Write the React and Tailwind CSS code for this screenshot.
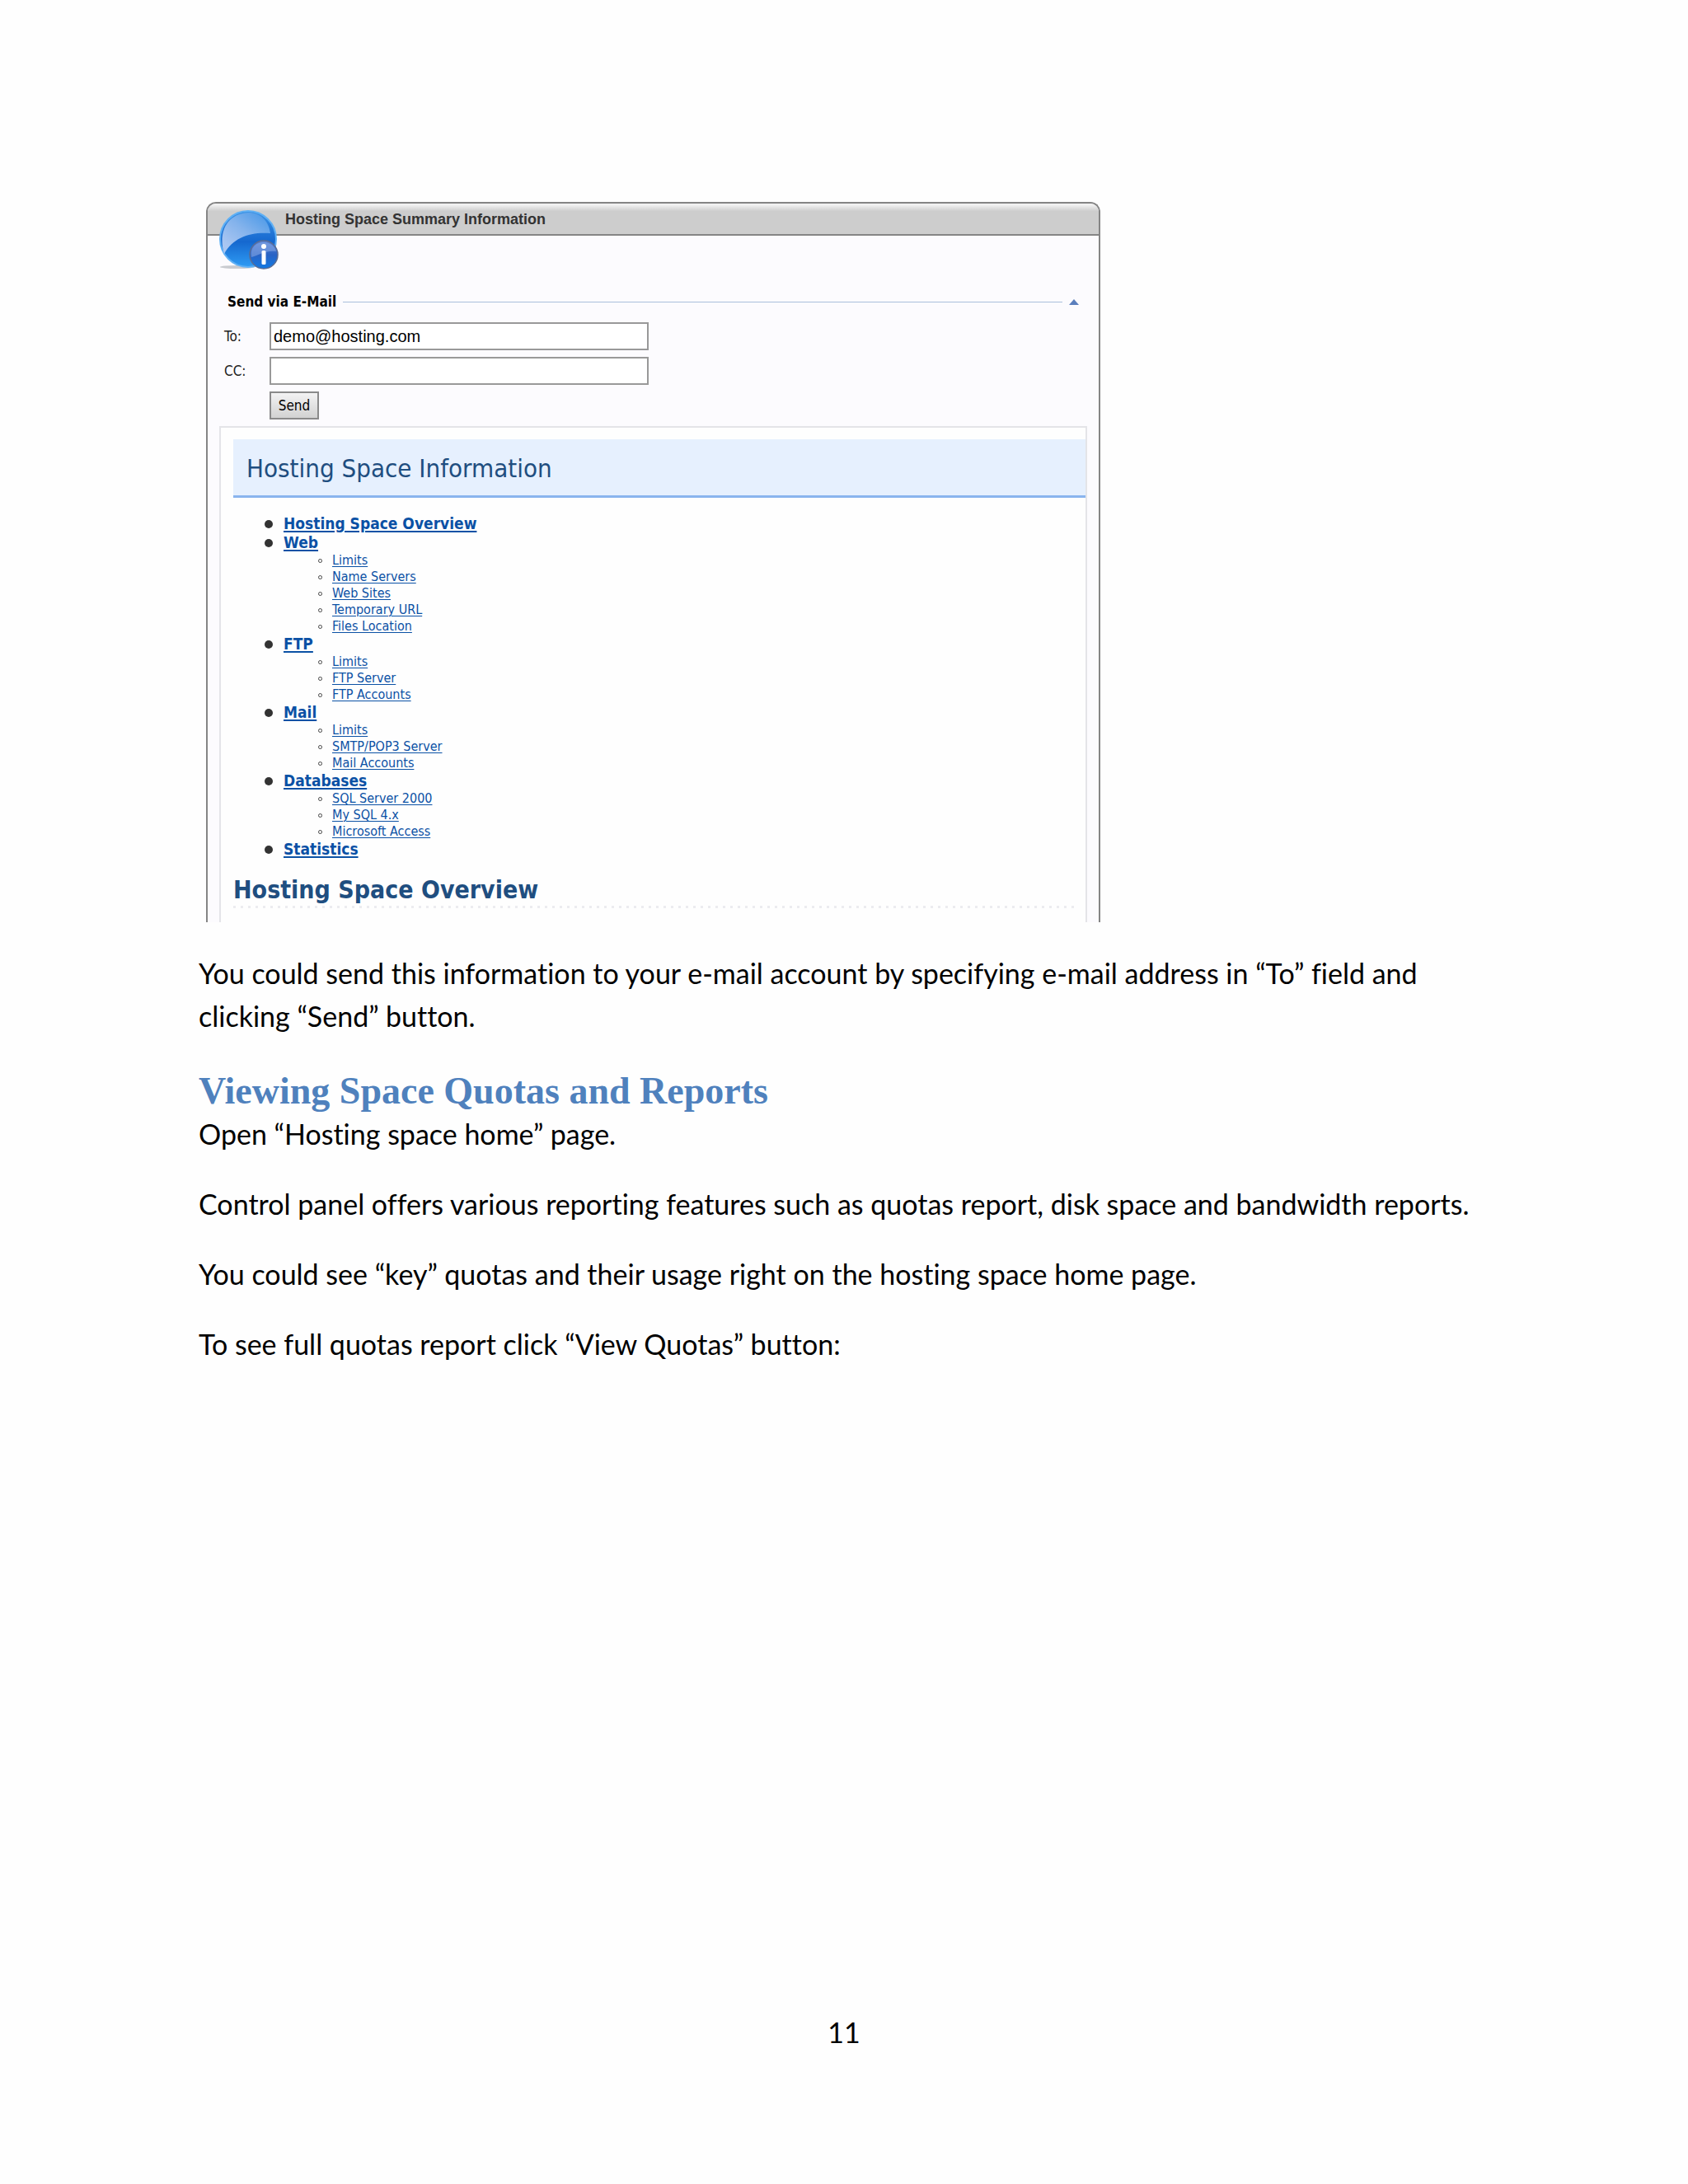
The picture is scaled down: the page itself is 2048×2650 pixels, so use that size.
import React, { useState } from 'react';

const sections = [
    { title: 'Hosting Space Overview', items: [] },
    { title: 'Web', items: ['Limits', 'Name Servers', 'Web Sites', 'Temporary URL', 'Files Location'] },
    { title: 'FTP', items: ['Limits', 'FTP Server', 'FTP Accounts'] },
    { title: 'Mail', items: ['Limits', 'SMTP/POP3 Server', 'Mail Accounts'] },
    { title: 'Databases', items: ['SQL Server 2000', 'My SQL 4.x', 'Microsoft Access'] },
    { title: 'Statistics', items: [] },
];

const slug = (...parts) => '#' + parts.join('-').toLowerCase().replace(/[^a-z0-9]+/g, '-');

const InfoIcon = () => (
    <svg viewBox="0 0 72 74" className="absolute left-[14px] top-[7px] w-[72px] h-[74px]" aria-hidden="true">
        <defs>
            <linearGradient id="ball" x1="0" y1="0" x2="0" y2="1">
                <stop offset="0" stopColor="#3f95e6" />
                <stop offset="0.55" stopColor="#1568cf" />
                <stop offset="1" stopColor="#2f9cf4" />
            </linearGradient>
            <linearGradient id="gloss" x1="0.8" y1="0" x2="0.1" y2="0.8">
                <stop offset="0" stopColor="#4f9be8" />
                <stop offset="0.5" stopColor="#84b3ec" />
                <stop offset="1" stopColor="#a9c6f2" />
            </linearGradient>
            <linearGradient id="badge" x1="0" y1="0" x2="0" y2="1">
                <stop offset="0" stopColor="#5c86d6" />
                <stop offset="0.5" stopColor="#2a63c4" />
                <stop offset="1" stopColor="#1179e4" />
            </linearGradient>
        </defs>
        <ellipse cx="22" cy="70" rx="21" ry="2" fill="#c9cbd0" />
        <circle cx="35" cy="36" r="34" fill="url(#ball)" stroke="#5fb0f5" strokeWidth="2" />
        <path d="M6 54 C-1 32 6 6 35 4 C50 4 60 14 62 29 C38 27 17 34 6 54 Z" fill="url(#gloss)" />
        <circle cx="54" cy="55" r="17" fill="url(#badge)" stroke="#5a6c94" strokeWidth="1.5" />
        <path d="M39 58 C37 46 45 40 54 40 C62 40 68 45 69 51 C57 49 47 56 39 58 Z" fill="#86a6e4" opacity="0.6" />
        <circle cx="54" cy="45" r="3" fill="#fff" />
        <rect x="51.5" y="50" width="5" height="17" rx="1.5" fill="#fff" />
    </svg>
);

const SummaryPanel = () => {
    const [to, setTo] = useState('demo@hosting.com');
    const [cc, setCc] = useState('');

    return (
        <section className="relative w-full max-w-[1085px] overflow-hidden border-2 border-b-0 border-[#858585] rounded-t-[12px] bg-[#fcfbfe] font-['DejaVu_Sans_Condensed','DejaVu_Sans',sans-serif] leading-none">
            <header className="h-[39px] pl-[94px] flex items-center border-b-2 border-[#858585] bg-linear-to-b from-[#f0f0f0] from-5% to-[#cdcdcd] to-25%">
                <h2 className="font-['Liberation_Sans',sans-serif] text-[18px] font-bold text-[#333]">Hosting Space Summary Information</h2>
            </header>
            <InfoIcon />

            <form onSubmit={(e) => e.preventDefault()} className="pt-[67px]">
                <div className="flex items-center h-[26px] px-6">
                    <h3 className="text-[17px] font-bold text-black">Send via E-Mail</h3>
                    <div className="flex-1 h-px mx-2 bg-[#a9bfdc]" />
                    <svg viewBox="0 0 12 7" className="w-[12px] h-[7px]" aria-hidden="true"><path d="M6 0 L12 7 H0 Z" fill="#5b7fbd" /></svg>
                </div>
                <div className="grid grid-cols-[55px_460px] gap-y-2 items-center pl-[20px] mt-[12px] text-[17px] text-[#222]">
                    <label htmlFor="to">To:</label>
                    <input id="to" type="text" value={to} onChange={(e) => setTo(e.target.value)} className="h-[34px] px-[3px] border-2 border-[#999] bg-white font-['Liberation_Sans',sans-serif] text-[20px] text-black" />
                    <label htmlFor="cc">CC:</label>
                    <input id="cc" type="text" value={cc} onChange={(e) => setCc(e.target.value)} className="h-[34px] px-[3px] border-2 border-[#999] bg-white font-['Liberation_Sans',sans-serif] text-[20px] text-black" />
                    <button type="submit" className="col-start-2 justify-self-start w-[60px] h-[34px] border-2 border-[#8a8a8a] bg-linear-to-b from-[#f3f3f3] to-[#d2d2d2] text-[17px] text-black">Send</button>
                </div>
            </form>

            <div className="mt-[8px] mx-[14px] pt-[14px] pl-[15px] pb-[17px] border-2 border-b-0 border-[#e4e4e8] bg-[#fefefe]">
                <h1 className="h-[71px] pt-[2px] pl-4 flex items-center border-b-3 border-[#8ab4ee] bg-[#e6f0fe] text-[31px] text-[#1f4e80]">Hosting Space Information</h1>
                <ul className="mt-[20px] pl-[38px] text-[#0b51a5]">
                    {sections.map(({ title, items }) => (
                        <li key={title}>
                            <div className="flex items-center h-[23px]">
                                <span className="size-[10px] mr-[13px] rounded-full bg-[#333]" />
                                <a href={slug(title)} className="text-[19px] font-bold underline decoration-2 underline-offset-2">{title}</a>
                            </div>
                            {items.length > 0 && (
                                <ul className="pl-[65px] text-[16px]">
                                    {items.map((item) => (
                                        <li key={item} className="flex items-center h-[20px]">
                                            <span className="size-[5px] mr-[12px] rounded-full border border-[#444]" />
                                            <a href={slug(title, item)} className="underline decoration-1 underline-offset-2">{item}</a>
                                        </li>
                                    ))}
                                </ul>
                            )}
                        </li>
                    ))}
                </ul>
                <h2 className="mt-[19px] h-[38px] flex items-center text-[30px] font-bold text-[#1f4e80]">Hosting Space Overview</h2>
                <div className="h-[3px] mr-[14px] bg-[linear-gradient(to_right,#ececf0_3px,transparent_3px)] bg-[size:9px_3px]" />
            </div>
        </section>
    );
};

const App = () => (
    <div className="min-h-screen flex flex-col pt-[245px] px-[241px] bg-[#fefefe] text-black font-[Lato,sans-serif] text-[34px] leading-[52px] [font-variant-ligatures:none]">
        <div className="pl-[9px]">
            <SummaryPanel />
        </div>
        <p className="mt-[36px]">
            You could send this information to your e-mail account by specifying e-mail address in “To” field and clicking “Send” button.
        </p>
        <h2 className="mt-[39px] font-['Liberation_Serif',serif] text-[46px] font-bold text-[#4f81bd]">Viewing Space Quotas and Reports</h2>
        <div className="flex flex-col gap-[33px]">
            <p>Open “Hosting space home” page.</p>
            <p>Control panel offers various reporting features such as quotas report, disk space and bandwidth reports.</p>
            <p>You could see “key” quotas and their usage right on the hosting space home page.</p>
            <p>To see full quotas report click “View Quotas” button:</p>
        </div>
        <footer className="mt-auto pb-[158px] text-center">11</footer>
    </div>
);

export default App;
